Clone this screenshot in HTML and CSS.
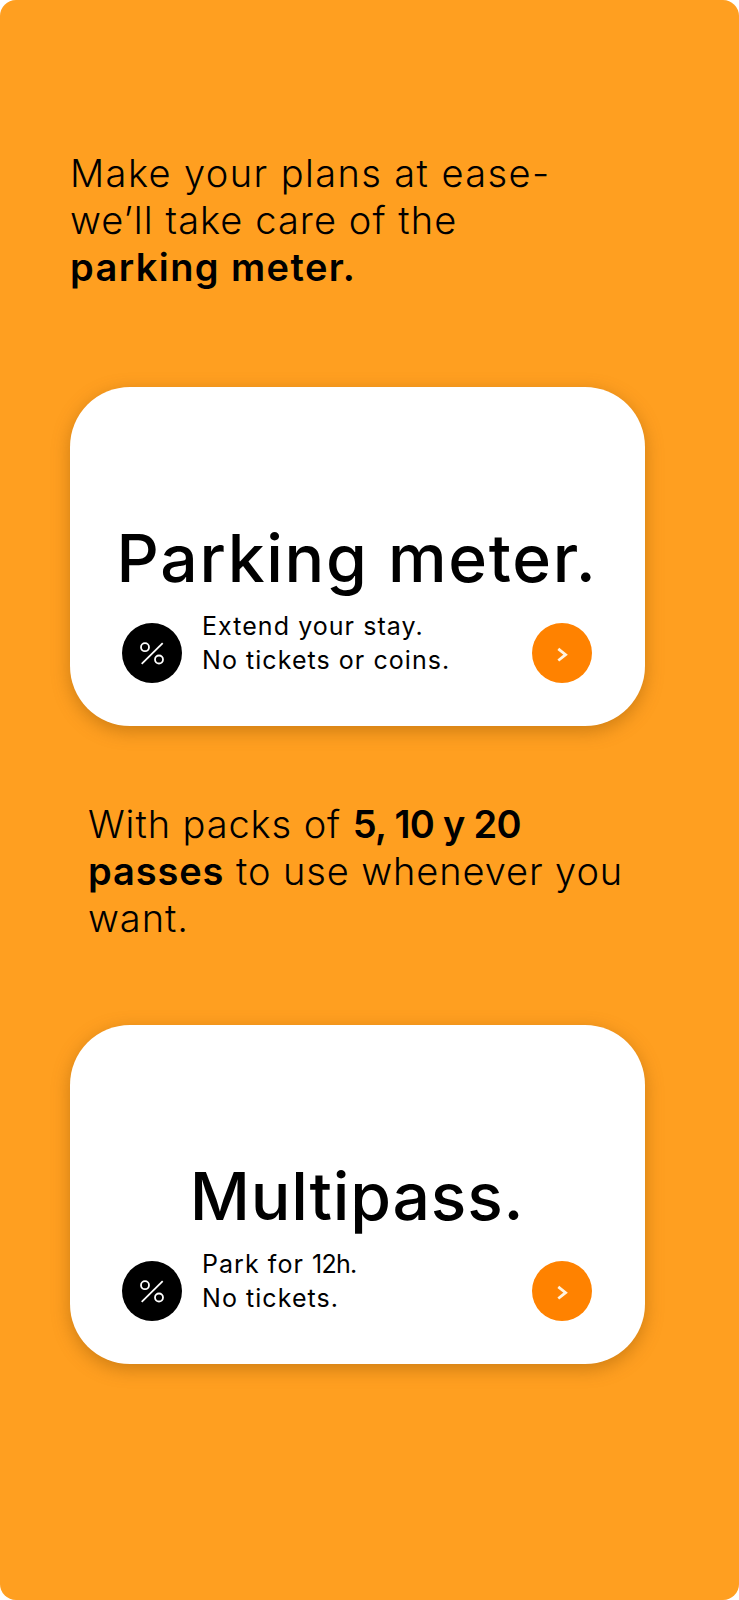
FILE: index.html
```html
<!DOCTYPE html>
<html lang="en">
<head>
  <meta charset="UTF-8" />
  <title>Parking meter</title>
  <meta name="viewport" content="width=device-width, initial-scale=1.0" />
  <link rel="stylesheet" href="styles.css">
</head>
<body>

  <main class="page">
    <h2 class="intro">Make your plans at ease-<br><span class="intro-snug">we’ll take care of the</span><br><strong>parking meter.</strong></h2>

    <section class="card">
      <h1 class="card-title">Parking meter.</h1>
      <div class="card-row">
        <span class="badge badge-dark">
          <svg viewBox="0 0 60 60" width="60" height="60"><circle cx="23" cy="24.2" r="4" /><circle cx="37" cy="36.5" r="4" /><path d="M40.7 20.2 19.7 40.8" /></svg>
        </span>
        <p class="card-text">Extend your stay.<br>No tickets or coins.</p>
        <span class="badge badge-orange">
          <svg viewBox="0 0 60 60" width="60" height="60"><path d="M26.3 25.8 33.6 31.7 26.3 37.5" /></svg>
        </span>
      </div>
    </section>

    <h2 class="intro intro-packs">With packs of <strong class="digits">5, 10 y 20</strong><br><strong>passes</strong> to use whenever you<br>want.</h2>

    <section class="card">
      <h1 class="card-title card-title-short">Multipass.</h1>
      <div class="card-row">
        <span class="badge badge-dark">
          <svg viewBox="0 0 60 60" width="60" height="60"><circle cx="23" cy="24.2" r="4" /><circle cx="37" cy="36.5" r="4" /><path d="M40.7 20.2 19.7 40.8" /></svg>
        </span>
        <p class="card-text">Park for <span class="digits">12h.</span><br>No tickets.</p>
        <span class="badge badge-orange">
          <svg viewBox="0 0 60 60" width="60" height="60"><path d="M26.3 25.8 33.6 31.7 26.3 37.5" /></svg>
        </span>
      </div>
    </section>
  </main>

</body>
</html>
```

FILE: styles.css
```css
body {
  margin: 0;
  background-color: white;
  color: black;
  font-family: Inter, "Open Sans", sans-serif;
}

.page {
  box-sizing: border-box;
  height: 1600px;
  padding: 150px 94px 0 70px;
  background-color: #ff9f20;
  border-radius: 16px;
  overflow: hidden;
}

.intro {
  margin: 0 0 96px;
  font-size: 38px;
  font-weight: 300;
  line-height: 47px;
  letter-spacing: 1.4px;
  white-space: nowrap;
}

.intro strong {
  font-weight: 600;
}

.intro-snug {
  letter-spacing: 1.07px;
}

.intro-packs {
  margin: 75px 0 83px 18px;
  letter-spacing: 0.9px;
}

/* numbers run narrower than the letters around them */
.digits {
  letter-spacing: -0.7px;
}

.card {
  box-sizing: border-box;
  height: 339px;
  padding: 0 53px 39px 52px;
  display: flex;
  flex-direction: column;
  justify-content: flex-end;
  background-color: white;
  border-radius: 60px;
  box-shadow: 0 5px 18px rgba(130, 75, 0, 0.4);
}

.card-title {
  margin: 0 -10px 19px;
  font-size: 66px;
  font-weight: 500;
  line-height: 84px;
  letter-spacing: 1.7px;
  text-align: center;
  white-space: nowrap;
}

.card-title-short {
  letter-spacing: 0.8px;
}

.card-row {
  display: flex;
  align-items: center;
}

.card-text {
  margin: 0 0 0 20px;
  flex: 1;
  font-size: 25px;
  line-height: 34px;
  letter-spacing: 1.05px;
  position: relative;
  top: -10px;
}

.badge {
  width: 60px;
  height: 60px;
  flex: none;
  border-radius: 50%;
}

.badge svg {
  display: block;
  fill: none;
  stroke: white;
  stroke-width: 1.8;
}

.badge-dark {
  background-color: black;
}

.badge-orange {
  background-color: #ff8200;
}

.badge-orange svg {
  stroke: #fff3e0;
  stroke-width: 2.8;
}
```
